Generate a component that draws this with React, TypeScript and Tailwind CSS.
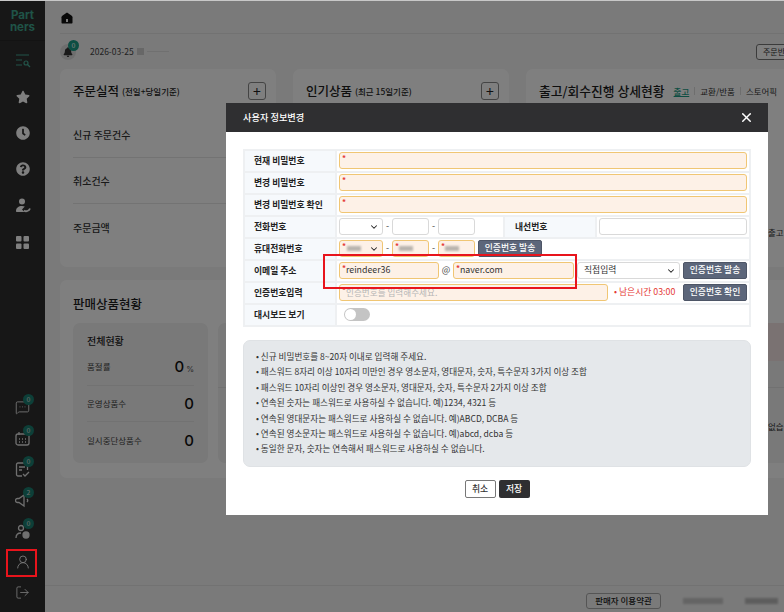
import { ChevronDown, X, MessageSquareMore, LogOut, UserRound } from "lucide-react";
import { FaStar, FaClock, FaQuestionCircle, FaBell } from "react-icons/fa";

const font = "font-['Noto_Sans_CJK_KR','Noto_Sans',sans-serif]";

const Badge = ({ n }: { n: number }) => (
    <span className="absolute -top-[6px] -right-[4px] flex h-[11px] w-[11px] items-center justify-center rounded-full bg-[#1a7f70] text-[7px] leading-none text-[#dddddd]">
        {n}
    </span>
);

const NavIcon = ({ children, n }: { children: React.ReactNode; n?: number }) => (
    <div className="relative flex h-[15px] w-[15px] items-center justify-center text-[#e0e0e0]">
        {children}
        {n !== undefined && <Badge n={n} />}
    </div>
);

const Sidebar = () => (
    <div className="flex h-full w-[45px] shrink-0 flex-col items-center bg-[#2e2e2e] pb-[12px]">
        <div className="flex h-[41px] w-full flex-col items-center justify-center border-b border-[#262626] pt-[2px] text-[11.500px] font-bold leading-[12px] text-[#3fa68f] font-['Inter',sans-serif]">
            <span>Part</span>
            <span>ners</span>
        </div>
        <div className="mt-[13px] flex flex-col items-center gap-[22px] text-white">
            <svg width="16" height="14" viewBox="0 0 16 14" fill="none" stroke="#45a893" strokeWidth="1.2">
                <path d="M1 1h13M1 6h6M1 11h6" />
                <circle cx="11" cy="9" r="2" />
                <path d="M12.5 10.5 15 13" />
            </svg>
            <FaStar size={14} />
            <FaClock size={14} />
            <FaQuestionCircle size={14} />
            <svg width="16" height="16" viewBox="0 0 16 16" fill="currentColor">
                <circle cx="7" cy="3.5" r="3" />
                <path d="M1 13c0-3 2.500-5 6-5 1 0 2 .2 2.800.5L7 11.500l2.500 2.500H2c-.6 0-1-.4-1-1Z" />
                <path d="M9 12.500c2 1.500 5 .5 6-2" fill="none" stroke="currentColor" strokeWidth="1.800" />
            </svg>
            <svg width="13" height="13" viewBox="0 0 13 13" fill="currentColor">
                <rect width="5.500" height="5.500" rx="1" />
                <rect x="7.500" width="5.500" height="5.500" rx="1" />
                <rect y="7.500" width="5.500" height="5.500" rx="1" />
                <rect x="7.500" y="7.500" width="5.500" height="5.500" rx="1" />
            </svg>
        </div>
        <div className="mt-auto flex flex-col items-center gap-[16px]">
            <NavIcon n={0}><MessageSquareMore size={15} strokeWidth={1.5} /></NavIcon>
            <NavIcon n={0}>
                <svg width="15" height="15" viewBox="0 0 15 15" fill="none" stroke="currentColor" strokeWidth="1.300">
                    <rect x="1" y="3" width="13" height="11" rx="2" />
                    <path d="M4 1v3M4 8h1M7 8h1M10 8h1M4 11h1M7 11h1M10 11h1" />
                </svg>
            </NavIcon>
            <NavIcon n={0}>
                <svg width="15" height="15" viewBox="0 0 15 15" fill="none" stroke="currentColor" strokeWidth="1.300">
                    <path d="M7 14H3a1.500 1.500 0 0 1-1.500-1.500v-10A1.500 1.500 0 0 1 3 1h8a1.500 1.500 0 0 1 1.500 1.500V8" />
                    <path d="M4 5h6M4 8h3M8 12l2 2 4-4" />
                </svg>
            </NavIcon>
            <NavIcon n={2}>
                <svg width="15" height="15" viewBox="0 0 15 15" fill="none" stroke="currentColor" strokeWidth="1.300">
                    <path d="M9 2 4 5.500H2.500a1.500 1.500 0 0 0 0 4H4L9 13Z" />
                    <path d="M12 6c1 1 1 2 0 3" />
                </svg>
            </NavIcon>
            <NavIcon n={0}>
                <svg width="15" height="15" viewBox="0 0 15 15" fill="none" stroke="currentColor" strokeWidth="1.300">
                    <circle cx="6" cy="4" r="2.500" />
                    <path d="M1 14c0-3 2-5 5-5" />
                    <circle cx="11" cy="11" r="3" fill="currentColor" />
                </svg>
            </NavIcon>
            <div className="-mt-[1px] h-[16px] text-[#f0f0f0]"><UserRound size={16} strokeWidth={1.4} /></div>
            <div className="-mt-[1px] h-[15px] text-[#e8e8e8]"><LogOut size={15} strokeWidth={1.4} /></div>
        </div>
    </div>
);

const CardHead = ({ title, sub }: { title: string; sub: string }) => (
    <div className="flex h-[18px] items-center justify-between">
        <p className="flex items-center whitespace-nowrap leading-none text-[#1c1c1c]">
            <span className="text-[12.500px] font-medium">{title}</span>
            <span className="ml-[3px] text-[8.500px] font-medium">{sub}</span>
        </p>
        <div className="flex h-[18px] w-[18px] items-center justify-center rounded-[3px] border border-[#888888] text-[14px] leading-none text-[#222222]">+</div>
    </div>
);

const StatRow = ({ label, last }: { label: string; last?: boolean }) => (
    <div className={`flex h-[46px] items-center text-[10px] font-medium text-[#333333] ${last ? "" : "border-b border-[#e6e6e6]"}`}>
        {label}
    </div>
);

const MiniStat = ({ label, value, unit, last }: { label: string; value: string; unit?: string; last?: boolean }) => (
    <div className={`flex h-[36.500px] items-center justify-between ${last ? "" : "border-b border-[#e4e4e4]"}`}>
        <span className="text-[8.500px] text-[#444444]">{label}</span>
        <span className="text-[15px] font-medium leading-none text-[#111111] font-['Inter',sans-serif]">
            {value}
            {unit && <span className="ml-[2px] text-[8px] font-normal text-[#555555]">{unit}</span>}
        </span>
    </div>
);

const Dashboard = () => (
    <div className="flex h-full min-w-0 flex-1 flex-col bg-[#f5f5f5]">
        <div className="ml-[15px] flex h-[34px] items-center border-b border-[#e4e4e4] pt-[2px] text-[#111111]">
            <svg width="12" height="12" viewBox="0 0 12 12" className="ml-[1px]" fill="currentColor">
                <path d="M6 .5 1.600 3.400C.9 3.900.5 4.500.5 5.300V10.500c0 .6.400 1 1 1h9c.6 0 1-.4 1-1V5.300c0-.8-.4-1.400-1.100-1.900Z" />
                <rect x="5" y="7" width="2" height="3" fill="#f5f5f5" />
            </svg>
        </div>
        <div className="ml-[15px] flex h-[35px] items-center">
            <div className="relative flex h-[16px] w-[16px] items-center justify-center rounded-full bg-[#dddddd] text-[#333333]">
                <FaBell size={10} />
                <span className="absolute -right-[3px] -top-[4px] flex h-[11px] w-[11px] items-center justify-center rounded-full bg-[#1a9c86] text-[7px] leading-none text-white">0</span>
            </div>
            <span className="ml-[14px] text-[8.500px] text-[#444444]">2026-03-25</span>
            <span className="ml-[3px] h-[7px] w-[7px] bg-[#cfcfcf]" />
            <span className="ml-[3px] h-[1px] w-[22px] bg-[#e0e0e0]" />
            <div className="ml-auto flex h-[16px] w-[40px] shrink-0 translate-x-[12px] items-center rounded-[3px] border border-[#777777] bg-white pl-[6px] text-[8px] whitespace-nowrap text-[#333333]">주문반품</div>
        </div>
        <div className="ml-[15px] flex w-[800px] gap-[17px]">
            <div className="h-[198px] w-[216px] rounded-[7px] bg-white pl-[13px] pr-[10px] pt-[13px]">
                <CardHead title="주문실적" sub="(전일+당일기준)" />
                <div className="mt-[12px] mr-[4px]">
                    <StatRow label="신규 주문건수" />
                    <StatRow label="취소건수" />
                    <StatRow label="주문금액" last />
                </div>
            </div>
            <div className="h-[198px] w-[216px] rounded-[7px] bg-white pl-[13px] pr-[10px] pt-[13px]">
                <CardHead title="인기상품" sub="(최근 15일기준)" />
            </div>
            <div className="h-[198px] w-[280px] rounded-[7px] bg-white pl-[13px] pt-[13px]">
                <div className="flex h-[18px] items-center whitespace-nowrap leading-none">
                    <span className="text-[12.800px] font-medium text-[#1c1c1c]">출고/회수진행 상세현황</span>
                    <span className="ml-[9px] text-[8.500px] font-medium text-[#1a9c86] underline">출고</span>
                    <span className="ml-[5px] border-l border-[#dddddd] pl-[5px] text-[8.500px] text-[#333333]">교환/반품</span>
                    <span className="ml-[5px] border-l border-[#dddddd] pl-[5px] text-[8.500px] text-[#333333]">스토어픽</span>
                </div>
                <p className="mt-[126px] h-[12px] pl-[229px] text-[8.500px] leading-[12px] whitespace-nowrap text-[#333333]">출고</p>
            </div>
        </div>
        <div className="ml-[15px] mt-[13px] h-[198px] w-[760px] rounded-[7px] bg-white px-[13px] pt-[15px]">
            <p className="h-[18px] text-[12.500px] font-medium leading-[18px] text-[#1c1c1c]">판매상품현황</p>
            <div className="mt-[10px] flex gap-[10px]">
                <div className="h-[140px] w-[135px] rounded-[7px] bg-[#f2f2f2] px-[14px] pt-[10px]">
                    <p className="h-[16px] text-[10px] font-medium leading-[16px] text-[#222222]">전체현황</p>
                    <MiniStat label="품절률" value="0" unit="%" />
                    <MiniStat label="운영상품수" value="0" />
                    <MiniStat label="일시중단상품수" value="0" last />
                </div>
                <div className="h-[140px] flex-1 rounded-[7px] bg-[#f2f2f2]">
                    <div className="ml-[540px] h-[38px] bg-[#f4e4e4]" />
                    <div className="mt-[26px] border-t border-[#e2e2e2] pl-[550px] pt-[32px]">
                        <p className="text-[8.500px] leading-[12px] whitespace-nowrap text-[#333333]">없습니다</p>
                    </div>
                </div>
            </div>
        </div>
        <div className="mt-auto flex h-[27px] items-center justify-end gap-[22px] border-t border-[#e4e4e4] pr-[6px] pt-[3px]">
            <div className="flex h-[16px] w-[75px] items-center justify-center rounded-[3px] border border-[#aaaaaa] text-[8.500px] font-medium text-[#222222]">판매자 이용약관</div>
            <div className="flex items-center gap-[22px]">
                <span className="h-[6px] w-[40px] bg-[#c8c8c8] blur-[1px]" />
                <span className="h-[6px] w-[33px] bg-[#bbbbbb] blur-[1px]" />
            </div>
        </div>
    </div>
);

const Row = ({ label, children, last }: { label: string; children: React.ReactNode; last?: boolean }) => (
    <div className={`flex h-[22px] border-t-2 border-x-2 border-[#eef0f2] ${last ? "h-[24px] border-b-2" : ""}`}>
        <Label text={label} />
        <div className="flex min-w-0 flex-1 items-center px-[2px] pb-[2px]">{children}</div>
    </div>
);

const Label = ({ text }: { text: string }) => (
    <div className="flex w-[92px] shrink-0 items-center border-r-2 border-[#eef0f2] bg-[#f6f9fc] pb-[1px] pl-[9px] text-[8.800px] font-semibold text-[#222222]">
        {text}
    </div>
);

const Req = () => <span className="absolute left-[2px] top-[1px] text-[8px] font-bold leading-none text-[#e53935]">*</span>;

const Field = ({ w, value, blur, hint }: { w?: string; value?: string; blur?: boolean; hint?: string }) => (
    <div className={`relative flex h-[17px] items-center rounded-[3px] border border-[#f0c674] bg-[#fdf1e7] pl-[6px] text-[8.800px] text-[#333333] ${w ?? "flex-1"}`}>
        <Req />
        {value}
        {blur && <span className="h-[5px] w-[14px] bg-[#b9b4ae] blur-[1px]" />}
        {hint && <span className="text-[8.600px] text-[#b5b5b5]">{hint}</span>}
    </div>
);

const Plain = ({ w }: { w: string }) => (
    <div className={`h-[17px] rounded-[3px] border border-[#d9d9d9] bg-white ${w}`} />
);

const Dot = () => <span className="w-[9px] text-center text-[9px] text-[#444444]">-</span>;

const Btn = ({ text }: { text: string }) => (
    <div className="ml-[3px] flex h-[17px] w-[64px] shrink-0 items-center justify-center rounded-[2px] border border-[#4d5566] bg-[#5c667a] text-[8.800px] font-medium text-white">{text}</div>
);

const notes = [
    "신규 비밀번호를 8~20자 이내로 입력해 주세요.",
    "패스워드 8자리 이상 10자리 미만인 경우 영소문자, 영대문자, 숫자, 특수문자 3가지 이상 조합",
    "패스워드 10자리 이상인 경우 영소문자, 영대문자, 숫자, 특수문자 2가지 이상 조합",
    "연속된 숫자는 패스워드로 사용하실 수 없습니다. 예)1234, 4321 등",
    "연속된 영대문자는 패스워드로 사용하실 수 없습니다. 예)ABCD, DCBA 등",
    "연속된 영소문자는 패스워드로 사용하실 수 없습니다. 예)abcd, dcba 등",
    "동일한 문자, 숫자는 연속해서 패스워드로 사용하실 수 없습니다.",
];

const Modal = () => (
    <div className="h-[412px] w-[542px] bg-white">
        <div className="flex h-[29px] items-center justify-between bg-[#2f2f31] pl-[17px] pr-[14px]">
            <span className="text-[9.200px] font-medium text-white">사용자 정보변경</span>
            <X size={15} strokeWidth={2.4} className="text-white" />
        </div>
        <div className="px-[17px] pt-[17px]">
            <div>
                <Row label="현재 비밀번호"><Field /></Row>
                <Row label="변경 비밀번호"><Field /></Row>
                <Row label="변경 비밀번호 확인"><Field /></Row>
                <Row label="전화번호">
                    <div className="relative h-[17px] w-[44px] rounded-[3px] border border-[#d9d9d9] bg-white">
                        <ChevronDown size={10} strokeWidth={2.5} className="absolute right-[3px] top-[3px] text-[#222222]" />
                    </div>
                    <Dot />
                    <Plain w="w-[37px]" />
                    <Dot />
                    <Plain w="w-[37px]" />
                    <div className="ml-[28px] -mb-[2px] flex h-[20px] w-[94px] shrink-0 items-center border-x-2 border-[#eef0f2] bg-[#f6f9fc] pl-[10px] text-[8.800px] font-semibold text-[#222222]">내선번호</div>
                    <Plain w="ml-[2px] flex-1" />
                </Row>
                <Row label="휴대전화번호">
                    <div className="relative flex h-[17px] w-[44px] items-center rounded-[3px] border border-[#f0c674] bg-[#fdf1e7] pl-[7px]">
                        <Req />
                        <span className="h-[5px] w-[14px] bg-[#b9b4ae] blur-[1px]" />
                        <ChevronDown size={10} strokeWidth={2.5} className="absolute right-[3px] top-[3px] text-[#222222]" />
                    </div>
                    <Dot />
                    <Field w="w-[37px]" blur />
                    <Dot />
                    <Field w="w-[37px]" blur />
                    <Btn text="인증번호 발송" />
                </Row>
                <Row label="이메일 주소">
                    <Field w="w-[100px]" value="reindeer36" />
                    <span className="w-[14px] text-center text-[9px] text-[#444444]">@</span>
                    <Field w="w-[121px]" value="naver.com" />
                    <div className="relative ml-[3px] flex h-[17px] w-[103px] items-center rounded-[3px] border border-[#d9d9d9] bg-white pl-[6px] text-[8.800px] text-[#333333]">
                        직접입력
                        <ChevronDown size={10} strokeWidth={2.5} className="absolute right-[3px] top-[3px] text-[#222222]" />
                    </div>
                    <Btn text="인증번호 발송" />
                </Row>
                <Row label="인증번호입력">
                    <Field w="w-[269px]" hint="인증번호를 입력해주세요." />
                    <span className="ml-[6px] flex-1 whitespace-nowrap text-[8.800px] text-[#e53935]">• 남은시간 03:00</span>
                    <Btn text="인증번호 확인" />
                </Row>
                <Row label="대시보드 보기" last>
                    <div className="ml-[5px] flex h-[13px] w-[26px] items-center rounded-full bg-[#c4c4c4] pl-[1px]">
                        <span className="h-[11px] w-[11px] rounded-full bg-white" />
                    </div>
                </Row>
            </div>
            <div className="mt-[13px] h-[127px] rounded-[7px] border border-[#dfe2e5] bg-[#e5e8eb] pl-[12px] pt-[8px]">
                {notes.map((n) => (
                    <p key={n} className="h-[15.400px] text-[8.600px] leading-[15px] text-[#333333]">• {n}</p>
                ))}
            </div>
            <div className="mt-[13px] flex justify-center gap-[3px]">
                <div className="flex h-[18px] w-[31px] items-center justify-center rounded-[2px] border border-[#777777] bg-white text-[8.800px] font-medium text-[#333333]">취소</div>
                <div className="flex h-[18px] w-[31px] items-center justify-center rounded-[2px] bg-[#2f2f31] text-[8.800px] font-medium text-white">저장</div>
            </div>
        </div>
    </div>
);

export default function App() {
    return (
        <div className={`relative flex h-[612px] w-[784px] overflow-hidden ${font}`}>
            <Sidebar />
            <Dashboard />
            <div className="absolute inset-0 bg-black/50 pl-[226px] pt-[103px]">
                <Modal />
            </div>
            {/* annotation boxes from the screenshot */}
            <div className="absolute left-[323px] top-[254px] h-[35px] w-[254px] border-2 border-[#e8141c]" />
            <div className="absolute left-[6px] top-[549px] h-[28px] w-[31px] border-2 border-[#e8141c]" />
            <div className="absolute inset-x-0 top-0 h-[1px] bg-[#c8c8c8]" />
        </div>
    );
}
